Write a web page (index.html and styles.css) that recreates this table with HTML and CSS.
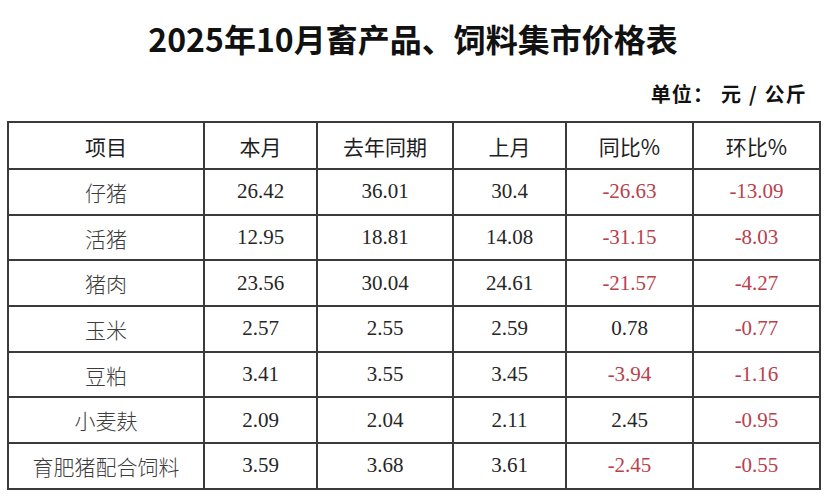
FILE: index.html
```html
<!DOCTYPE html>
<html lang="zh-CN">
<head>
<meta charset="utf-8">
<title>2025年10月畜产品、饲料集市价格表</title>
<link rel="stylesheet" href="styles.css">
</head>
<body>
<div class="page">
  <h1 class="title">2025年10月畜产品、饲料集市价格表</h1>
  <div class="unit">单位：&nbsp;元 / 公斤</div>
  <table class="price">
    <colgroup>
      <col class="c1"><col class="c2"><col class="c3"><col class="c4"><col class="c5"><col class="c6">
    </colgroup>
    <thead>
      <tr><th>项目</th><th>本月</th><th>去年同期</th><th>上月</th><th>同比%</th><th>环比%</th></tr>
    </thead>
    <tbody>
      <tr><td class="name">仔猪</td><td>26.42</td><td>36.01</td><td>30.4</td><td class="neg">-26.63</td><td class="neg">-13.09</td></tr>
      <tr><td class="name">活猪</td><td>12.95</td><td>18.81</td><td>14.08</td><td class="neg">-31.15</td><td class="neg">-8.03</td></tr>
      <tr><td class="name">猪肉</td><td>23.56</td><td>30.04</td><td>24.61</td><td class="neg">-21.57</td><td class="neg">-4.27</td></tr>
      <tr><td class="name">玉米</td><td>2.57</td><td>2.55</td><td>2.59</td><td>0.78</td><td class="neg">-0.77</td></tr>
      <tr><td class="name">豆粕</td><td>3.41</td><td>3.55</td><td>3.45</td><td class="neg">-3.94</td><td class="neg">-1.16</td></tr>
      <tr><td class="name">小麦麸</td><td>2.09</td><td>2.04</td><td>2.11</td><td>2.45</td><td class="neg">-0.95</td></tr>
      <tr><td class="name">育肥猪配合饲料</td><td>3.59</td><td>3.68</td><td>3.61</td><td class="neg">-2.45</td><td class="neg">-0.55</td></tr>
    </tbody>
  </table>
</div>
</body>
</html>
```

FILE: styles.css
```css
html, body {
  margin: 0;
  padding: 0;
  background: #ffffff;
}
.page {
  width: 812px;
  margin-left: 7px;
  padding-top: 19px;
  font-family: "Noto Sans CJK SC", "Noto Sans", sans-serif;
  color: #1a1a1a;
}
.title {
  margin: 0;
  font-size: 32px;
  line-height: 38px;
  font-weight: 700;
  text-align: center;
  color: #111;
}
.unit {
  margin-top: 25px;
  text-align: right;
  padding-right: 12px;
  font-size: 20px;
  line-height: 24px;
  font-weight: 700;
  letter-spacing: 1.2px;
  word-spacing: 1px;
  color: #111;
}
.price {
  margin-top: 15px;
  width: 812px;
  border-collapse: collapse;
  table-layout: fixed;
  border: 2px solid #3a3a3a;
}
.c1 { width: 196px; }
.c2 { width: 113px; }
.c3 { width: 136px; }
.c4 { width: 113px; }
.c5 { width: 127px; }
.c6 { width: 127px; }
.price th, .price td {
  border: 2px solid #3a3a3a;
  text-align: center;
  padding: 0;
  height: 43.7px;
}
.price th {
  height: 45px;
  font-family: "Noto Sans CJK SC", sans-serif;
  font-weight: 400;
  font-size: 21px;
  color: #1e1e1e;
}
.price td {
  font-family: "Liberation Serif", "Noto Sans CJK SC", serif;
  font-size: 21px;
  color: #262626;
}
.price td.name {
  font-family: "Noto Sans CJK SC", sans-serif;
  font-weight: 300;
  font-size: 21px;
  color: #3c3c3c;
}
.price td.neg {
  color: #b8414c;
}
```
